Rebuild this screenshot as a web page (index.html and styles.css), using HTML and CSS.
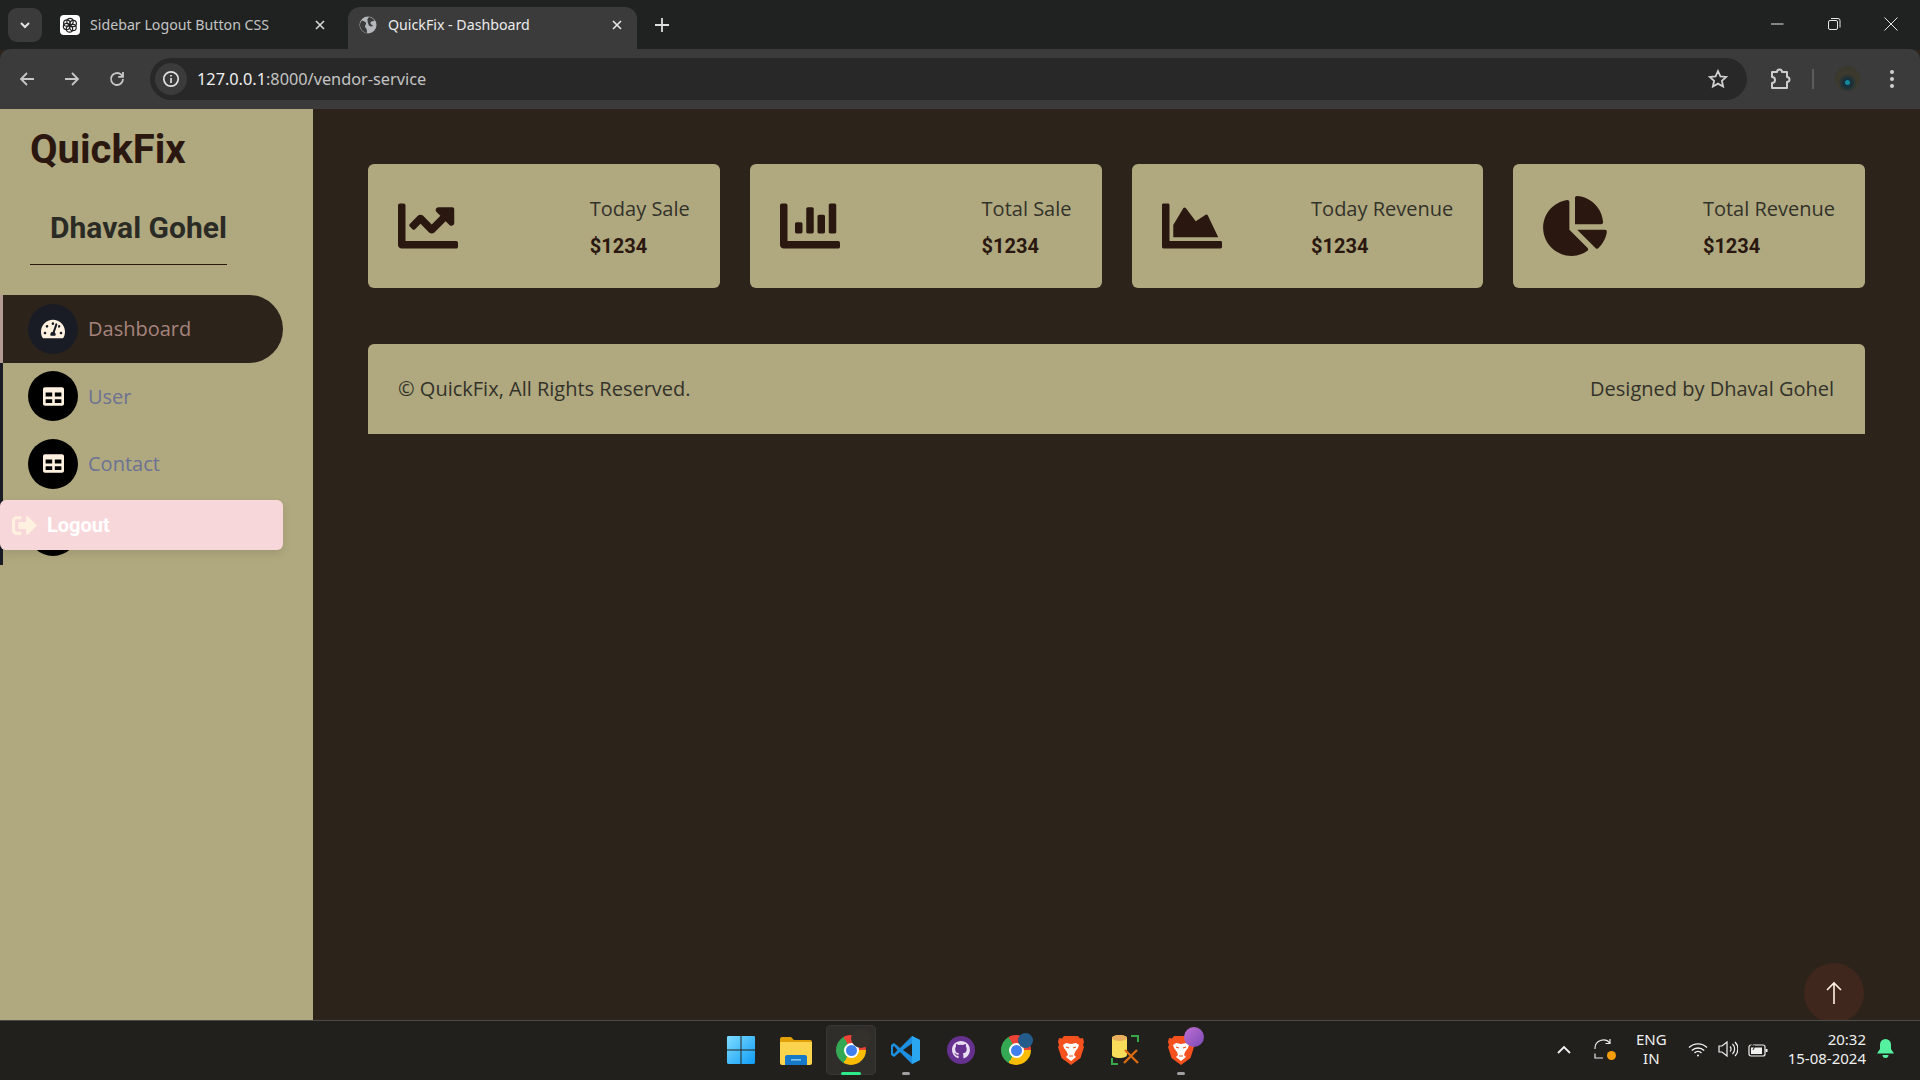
FILE: index.html
```html
<!DOCTYPE html>
<html lang="en">
<head>
    <meta charset="UTF-8">
    <meta name="viewport" content="width=device-width, initial-scale=1.0">
    <title>QuickFix - Dashboard</title>
    <link rel="stylesheet" href="styles.css">
</head>
<body>
    <!-- browser window -->
    <div class="tabbar">
        <div class="tab-search">
            <svg width="12" height="12" viewBox="0 0 12 12"><path d="M2 4l4 4 4-4" fill="none" stroke="#e3e3e3" stroke-width="2"/></svg>
        </div>
        <div class="tab">
            <span class="favicon favicon-gpt">
                <svg width="18" height="18" viewBox="0 0 18 18" fill="none" stroke="#222" stroke-width="1.2"><circle cx="9" cy="5.5" r="3.2"/><circle cx="12.2" cy="7.5" r="3.2"/><circle cx="12" cy="11.5" r="3.2"/><circle cx="8.5" cy="13" r="3.2"/><circle cx="5.5" cy="10.5" r="3.2"/><circle cx="5.8" cy="7" r="3.2"/></svg>
            </span>
            <span class="tab-title">Sidebar Logout Button CSS</span>
            <svg class="tab-close" width="12" height="12" viewBox="0 0 12 12"><path d="M2 2l8 8M10 2l-8 8" stroke="#d8d8d8" stroke-width="1.6"/></svg>
        </div>
        <div class="tab tab-active">
            <span class="favicon">
                <svg width="18" height="18" viewBox="0 0 18 18"><circle cx="9" cy="9" r="8.5" fill="#b5b8bb"/><path d="M3 4.5c2 .5 3.5 1 4 2.5S5 10 6.500 11.500 8 15 8 17c-4-.5-7-4-7-8 0-1.600.7-3.300 2-4.500zM10 1c2.500.5 4 1.500 5.500 3.500-1.500 1-3.500.5-4 2s1.500 2.500 2.500 3c-1 1.500-2.500 1-3.500.5S9 7 8.500 5 9 2.500 10 1z" fill="#3c3c3c"/></svg>
            </span>
            <span class="tab-title">QuickFix - Dashboard</span>
            <svg class="tab-close" width="12" height="12" viewBox="0 0 12 12"><path d="M2 2l8 8M10 2l-8 8" stroke="#e8e8e8" stroke-width="1.6"/></svg>
        </div>
        <svg class="new-tab" width="14" height="14" viewBox="0 0 14 14"><path d="M7 0v14M0 7h14" stroke="#dedede" stroke-width="1.800"/></svg>
        <div class="window-btns">
            <svg width="14" height="14" viewBox="0 0 14 14"><path d="M1 7h12.500" stroke="#e6e6e6" stroke-width="1"/></svg>
            <svg width="14" height="14" viewBox="0 0 14 14" fill="none" stroke="#e6e6e6"><rect x="1.500" y="3.500" width="9" height="9" rx="1.500"/><path d="M4 1.500h7a2 2 0 0 1 2 2v7"/></svg>
            <svg width="14" height="14" viewBox="0 0 14 14"><path d="M.5.5l13 13M13.500.5l-13 13" stroke="#e6e6e6"/></svg>
        </div>
    </div>

    <div class="toolbar">
        <svg class="nav-arrow" width="18" height="18" viewBox="0 0 18 18" fill="none" stroke="#c7c7c7" stroke-width="1.800"><path d="M16 9H3M9 3L3 9l6 6"/></svg>
        <svg class="nav-arrow" width="18" height="18" viewBox="0 0 18 18" fill="none" stroke="#c7c7c7" stroke-width="1.800"><path d="M2 9h13M9 3l6 6-6 6"/></svg>
        <svg class="nav-arrow" width="18" height="18" viewBox="0 0 18 18" fill="none" stroke="#c7c7c7" stroke-width="1.800"><path d="M15 9a6 6 0 1 1-1.800-4.300L15 6.500"/><path d="M15 2v4.800h-4.800" /></svg>
        <div class="omnibox">
            <span class="site-info">
                <svg width="18" height="18" viewBox="0 0 18 18" fill="none" stroke="#e0e0e0" stroke-width="1.700"><circle cx="9" cy="9" r="7.200"/><path d="M9 8v5M9 5v1.600"/></svg>
            </span>
            <span class="url"><span class="url-host">127.0.0.1</span>:8000/vendor-service</span>
            <svg class="star" width="20" height="20" viewBox="0 0 20 20" fill="none" stroke="#d0d0d0" stroke-width="1.800"><path d="M10 2l2.400 5.300 5.800.6-4.300 3.900 1.200 5.700L10 14.600l-5.100 2.900 1.200-5.700L1.800 7.900l5.800-.6z"/></svg>
        </div>
        <svg class="puzzle" width="22" height="22" viewBox="0 0 22 22" fill="none" stroke="#cdcdcd" stroke-width="2"><path d="M2 4h5a2.500 2.500 0 0 1 5 0h5v5a2.500 2.500 0 0 1 0 5v6H2v-5a3 3 0 0 0 0-6z" stroke-linejoin="round"/></svg>
        <span class="toolbar-sep"></span>
        <span class="avatar"><span class="avatar-eye"></span></span>
        <svg class="kebab" width="6" height="20" viewBox="0 0 6 20" fill="#cfcfcf"><circle cx="3" cy="3" r="2"/><circle cx="3" cy="10" r="2"/><circle cx="3" cy="17" r="2"/></svg>
    </div>

    <!-- page -->
    <div class="page">
        <aside class="sidebar">
            <h3 class="logo">QuickFix</h3>
            <div class="profile"><h4 class="profile-name">Dhaval Gohel</h4></div>
            <nav class="side-nav">
                <a href="#" class="nav-item active">
                    <span class="nav-icon">
                        <svg width="24" height="24" viewBox="0 0 576 512" fill="#fff1e0"><path d="M288 32C128.940 32 0 160.940 0 320c0 52.800 14.250 102.260 39.060 144.800 5.610 9.620 16.300 15.200 27.440 15.200h443c11.140 0 21.830-5.580 27.440-15.200C561.750 422.260 576 372.800 576 320c0-159.060-128.940-288-288-288zm0 64c14.710 0 26.580 10.130 30.320 23.650-1.110 2.260-2.640 4.230-3.450 6.670l-9.220 27.670c-5.130 3.490-10.970 6.010-17.640 6.010-17.670 0-32-14.330-32-32S270.330 96 288 96zM96 384c-17.670 0-32-14.330-32-32s14.330-32 32-32 32 14.330 32 32-14.330 32-32 32zm48-160c-17.670 0-32-14.330-32-32s14.330-32 32-32 32 14.330 32 32-14.330 32-32 32zm246.770-72.410l-61.330 184C343.130 347.330 352 364.540 352 384c0 11.720-3.380 22.550-8.880 32H232.880c-5.500-9.450-8.880-20.280-8.880-32 0-33.940 26.500-61.430 59.900-63.590l61.340-184.010c4.170-12.560 17.730-19.450 30.360-15.170 12.570 4.190 19.350 17.790 15.170 30.360zm14.660 57.200l15.520-46.550c3.470-1.290 7.130-2.230 11.050-2.230 17.670 0 32 14.330 32 32s-14.330 32-32 32c-11.380-.01-20.890-6.280-26.570-15.220zM480 384c-17.670 0-32-14.330-32-32s14.330-32 32-32 32 14.330 32 32-14.330 32-32 32z"/></svg>
                    </span>
                    Dashboard
                </a>
                <a href="#" class="nav-item">
                    <span class="nav-icon">
                        <svg width="21" height="21" viewBox="0 0 512 512" fill="#fff1e0"><path d="M464 32H48C21.490 32 0 53.490 0 80v352c0 26.510 21.490 48 48 48h416c26.510 0 48-21.490 48-48V80c0-26.510-21.490-48-48-48zM224 416H64v-96h160v96zm0-160H64v-96h160v96zm224 160H288v-96h160v96zm0-160H288v-96h160v96z"/></svg>
                    </span>
                    User
                </a>
                <a href="#" class="nav-item">
                    <span class="nav-icon">
                        <svg width="21" height="21" viewBox="0 0 512 512" fill="#fff1e0"><path d="M464 32H48C21.490 32 0 53.490 0 80v352c0 26.510 21.490 48 48 48h416c26.510 0 48-21.490 48-48V80c0-26.510-21.490-48-48-48zM224 416H64v-96h160v96zm0-160H64v-96h160v96zm224 160H288v-96h160v96zm0-160H288v-96h160v96z"/></svg>
                    </span>
                    Contact
                </a>
                <a href="#" class="nav-item">
                    <span class="nav-icon"></span>
                </a>
            </nav>
            <a href="#" class="logout-btn">
                <svg width="25" height="25" viewBox="0 0 512 512" fill="#fff1e0"><path d="M497 273L329 441c-15 15-41 4.500-41-17v-96H152c-13.300 0-24-10.700-24-24v-96c0-13.300 10.700-24 24-24h136V88c0-21.400 25.900-32 41-17l168 168c9.300 9.400 9.300 24.600 0 34zM192 436v-40c0-6.600-5.400-12-12-12H96c-17.700 0-32-14.300-32-32V160c0-17.700 14.300-32 32-32h84c6.600 0 12-5.400 12-12V76c0-6.600-5.400-12-12-12H96c-53 0-96 43-96 96v192c0 53 43 96 96 96h84c6.600 0 12-5.400 12-12z"/></svg>
                Logout
            </a>
        </aside>

        <main class="content">
            <section class="stats">
                <div class="stat-card">
                    <svg class="stat-icon" width="60" height="60" viewBox="0 0 512 512"><path d="M496 384H64V80c0-8.840-7.160-16-16-16H16C7.160 64 0 71.160 0 80v336c0 17.670 14.330 32 32 32h464c8.840 0 16-7.160 16-16v-32c0-8.840-7.160-16-16-16zM464 96H345.940c-21.380 0-32.090 25.850-16.970 40.970l32.400 32.400L288 242.750l-73.370-73.370c-12.500-12.500-32.760-12.500-45.250 0l-68.690 68.690c-6.250 6.250-6.250 16.380 0 22.630l22.620 22.620c6.250 6.250 16.380 6.250 22.630 0L192 237.250l73.370 73.370c12.500 12.500 32.760 12.500 45.250 0l96-96 32.400 32.400c15.120 15.120 40.970 4.410 40.970-16.970V112c.01-8.840-7.150-16-15.990-16z"/></svg>
                    <div class="stat-text"><p class="stat-label">Today Sale</p><h6 class="stat-value">$1234</h6></div>
                </div>
                <div class="stat-card">
                    <svg class="stat-icon" width="60" height="60" viewBox="0 0 512 512"><path d="M332.800 320h38.400c6.400 0 12.800-6.400 12.800-12.800V172.800c0-6.400-6.400-12.800-12.800-12.800h-38.400c-6.400 0-12.800 6.400-12.800 12.800v134.400c0 6.400 6.400 12.800 12.800 12.800zm96 0h38.400c6.400 0 12.800-6.400 12.800-12.800V76.800c0-6.400-6.400-12.800-12.800-12.800h-38.400c-6.400 0-12.800 6.400-12.800 12.800v230.400c0 6.400 6.400 12.800 12.800 12.800zm-288 0h38.400c6.400 0 12.800-6.400 12.800-12.800v-70.400c0-6.400-6.400-12.800-12.800-12.800h-38.400c-6.400 0-12.800 6.400-12.800 12.800v70.400c0 6.400 6.400 12.800 12.800 12.800zm96 0h38.400c6.400 0 12.800-6.400 12.800-12.800V108.800c0-6.400-6.400-12.800-12.800-12.800h-38.400c-6.400 0-12.800 6.400-12.800 12.800v198.400c0 6.400 6.400 12.800 12.800 12.800zM496 384H64V80c0-8.840-7.160-16-16-16H16C7.160 64 0 71.160 0 80v336c0 17.670 14.330 32 32 32h464c8.840 0 16-7.160 16-16v-32c0-8.840-7.160-16-16-16z"/></svg>
                    <div class="stat-text"><p class="stat-label">Total Sale</p><h6 class="stat-value">$1234</h6></div>
                </div>
                <div class="stat-card">
                    <svg class="stat-icon" width="60" height="60" viewBox="0 0 512 512"><path d="M500 384c6.600 0 12 5.400 12 12v40c0 6.600-5.400 12-12 12H12c-6.600 0-12-5.400-12-12V76c0-6.600 5.400-12 12-12h40c6.600 0 12 5.400 12 12v308h436zM372.700 159.500L288 216l-85.300-113.700c-5.100-6.800-15.500-6.300-19.900 1L96 248v104h384l-89.900-187.800c-3.200-6.500-11.400-8.700-17.400-4.700z"/></svg>
                    <div class="stat-text"><p class="stat-label">Today Revenue</p><h6 class="stat-value">$1234</h6></div>
                </div>
                <div class="stat-card">
                    <svg class="stat-icon" width="64" height="60" viewBox="0 0 544 512"><path d="M527.790 288H290.500l158.030 158.030c6.040 6.040 15.980 6.530 22.190.68 38.700-36.460 65.320-85.610 73.130-140.860 1.340-9.460-6.510-17.850-16.060-17.850zm-15.830-64.800C503.720 103.740 408.260 8.280 288.800.04 279.680-.59 272 7.100 272 16.240V240h223.770c9.140 0 16.820-7.680 16.190-16.800zM224 288V50.710c0-9.550-8.390-17.400-17.840-16.060C86.990 51.490-4.100 155.600.14 280.370 4.500 408.510 114.830 513.590 243.030 511.980c50.400-.63 96.970-16.870 135.260-44.030 7.900-5.600 8.420-17.230 1.570-24.080L224 288z"/></svg>
                    <div class="stat-text"><p class="stat-label">Total Revenue</p><h6 class="stat-value">$1234</h6></div>
                </div>
            </section>
            <footer class="page-footer">
                <span>&copy; QuickFix, All Rights Reserved.</span>
                <span>Designed by Dhaval Gohel</span>
            </footer>
        </main>

        <a href="#" class="back-top">
            <svg width="16" height="24" viewBox="0 0 16 24" fill="none" stroke="#fff1e0" stroke-width="1.600"><path d="M8 23V2M1 9l7-7 7 7"/></svg>
        </a>
    </div>

    <!-- windows taskbar -->
    <div class="taskbar">
        <div class="task-spacer"></div>
        <div class="task-icons">
            <span class="task-slot">
                <svg width="30" height="30" viewBox="0 0 31 31"><defs><linearGradient id="winblue" x1="0" y1="0" x2="1" y2="1"><stop offset="0" stop-color="#7fdcff"/><stop offset="1" stop-color="#0f9cf5"/></linearGradient></defs><path d="M1 2.500A1.500 1.500 0 0 1 2.500 1H15v14H1zM16 1h12.500A1.500 1.500 0 0 1 30 2.500V15H16zM1 16h14v14H2.500A1.500 1.500 0 0 1 1 28.500zM16 16h14v12.500a1.500 1.500 0 0 1-1.500 1.500H16z" fill="url(#winblue)"/></svg>
            </span>
            <span class="task-slot">
                <svg width="32" height="29" viewBox="0 0 32 29"><path d="M0 3a2 2 0 0 1 2-2h9l3 3h16a2 2 0 0 1 2 2v3H0z" fill="#e3a008"/><path d="M0 6h32v21a2 2 0 0 1-2 2H2a2 2 0 0 1-2-2z" fill="#fcd34d"/><path d="M5 21a2 2 0 0 1 2-2h18a2 2 0 0 1 2 2v8H5z" fill="#1878c8"/><rect x="11" y="23" width="10" height="1.600" fill="#7cc4f0"/></svg>
            </span>
            <span class="task-slot task-slot-active">
                <span class="chrome-logo"><span class="chrome-eye"></span></span>
                <span class="profile-badge badge-dark"></span>
                <span class="run-dot run-dot-on"></span>
            </span>
            <span class="task-slot">
                <svg width="30" height="30" viewBox="0 0 30 30"><path d="M21 1l8 4v20l-8 4-12-12-6 5-3-2V10l3-2 6 5z" fill="#1d8fe0"/><path d="M21 1l8 4v20l-8 4z" fill="#2aa6f0"/><path d="M21 8.500L12 15l9 6.500z" fill="#21201c"/><path d="M3 11l-1 1v6l1 1 3.500-4z" fill="#21201c"/></svg>
                <span class="run-dot"></span>
            </span>
            <span class="task-slot">
                <svg width="28" height="28" viewBox="0 0 28 28"><circle cx="14" cy="14" r="14" fill="#66308f"/><path d="M14 5c-5 0-9 3.800-9 8.800 0 3.900 2.500 7.200 6 8.400.4.100.6-.2.600-.5v-2c-2.300.5-3-1-3-1-.4-1-1-1.300-1-1.300-.7-.5.100-.5.100-.5.800.1 1.300.9 1.300.9.800 1.300 2 1 2.600.7.100-.6.300-1 .6-1.200-2-.2-4-1-4-4.400 0-1 .3-1.800.9-2.400-.1-.2-.4-1.100.1-2.400 0 0 .8-.2 2.500 1a8.500 8.500 0 0 1 4.500 0c1.700-1.200 2.500-1 2.500-1 .5 1.300.2 2.200.1 2.400.6.600.9 1.400.9 2.400 0 3.400-2 4.200-4 4.400.3.300.6.800.6 1.600v2.900c0 .3.200.6.600.5 3.500-1.200 6-4.500 6-8.400C23 8.800 19 5 14 5z" fill="#e9ddf2"/></svg>
            </span>
            <span class="task-slot">
                <span class="chrome-logo"><span class="chrome-eye"></span></span>
                <span class="profile-badge badge-blue"></span>
            </span>
            <span class="task-slot">
                <svg width="26" height="30" viewBox="0 0 26 30"><path d="M6 1h14l2 2.500 3-.5 1 4-1 3 1 2-3.500 11-7.500 5.500-2 1.500-2-1.500L3.500 23 0 12l1-2-1-3 1-4 3 .5z" fill="#f4511e"/><path d="M8 8l5 1 5-1 3 2-1 3-3 4-1 3 2 2-5 4-5-4 2-2-1-3-3-4-1-3z" fill="#fff"/><path d="M8 12l3 1M18 12l-3 1M11 21h4" stroke="#f4511e" stroke-width="1.200"/></svg>
            </span>
            <span class="task-slot">
                <svg width="30" height="30" viewBox="0 0 30 30"><path d="M1 3c0-1.600 3-3 7.500-3S16 1.400 16 3v17c0 1.600-3 3-7.500 3S1 21.600 1 20z" fill="#f7dd5a"/><ellipse cx="8.500" cy="3" rx="7.500" ry="3" fill="#e8ad5e"/><path d="M20 1h7v6M1 23v6h6M27 20" fill="none" stroke="#39a84a" stroke-width="2"/><path d="M13 28l13-13M14 15l13 13" stroke="#d96a12" stroke-width="2.400"/></svg>
            </span>
            <span class="task-slot">
                <svg width="26" height="30" viewBox="0 0 26 30"><path d="M6 1h14l2 2.500 3-.5 1 4-1 3 1 2-3.500 11-7.500 5.500-2 1.500-2-1.500L3.500 23 0 12l1-2-1-3 1-4 3 .5z" fill="#f4511e"/><path d="M8 8l5 1 5-1 3 2-1 3-3 4-1 3 2 2-5 4-5-4 2-2-1-3-3-4-1-3z" fill="#fff"/><path d="M8 12l3 1M18 12l-3 1M11 21h4" stroke="#f4511e" stroke-width="1.200"/></svg>
                <span class="profile-badge badge-purple"></span>
                <span class="run-dot"></span>
            </span>
        </div>
        <div class="tray">
            <svg width="14" height="9" viewBox="0 0 14 9" fill="none" stroke="#f0f0f0" stroke-width="1.800"><path d="M1 8l6-6 6 6"/></svg>
            <span class="tray-sync">
                <svg width="21" height="22" viewBox="0 0 21 22" fill="none" stroke="#e8e8e8" stroke-width="1.200"><path d="M1 11A8.500 8.500 0 0 1 16 5M16 1v4.500h-4.500M5 20h4M1 15.500V20h4.500"/></svg>
                <span class="tray-sync-dot"></span>
            </span>
            <span class="tray-lang">ENG<br>IN</span>
            <span class="tray-status">
                <svg width="20" height="15" viewBox="0 0 20 15" fill="none" stroke="#f0f0f0" stroke-width="1.400"><path d="M1 5.500a13 13 0 0 1 18 0M3.800 8.500a9 9 0 0 1 12.400 0M6.500 11a5 5 0 0 1 7 0"/><circle cx="10" cy="13.500" r="1" fill="#f0f0f0" stroke="none"/></svg>
                <svg width="20" height="18" viewBox="0 0 20 18" fill="none" stroke="#f0f0f0" stroke-width="1.200"><path d="M1 6h3l5-4v14l-5-4H1zM12 6.500a3.500 3.500 0 0 1 0 5M14.500 4a7 7 0 0 1 0 10M17 2a10 10 0 0 1 0 14"/></svg>
                <svg width="20" height="17" viewBox="0 0 20 17" fill="none" stroke="#f0f0f0" stroke-width="1.200"><rect x="1" y="4" width="16" height="11" rx="2"/><rect x="3" y="6.500" width="11" height="6.500" fill="#f0f0f0" stroke="none"/><path d="M18.500 8v3" stroke-width="2"/><path d="M6 0L3.500 5H7L5 9" stroke="#21201c" stroke-width="1"/></svg>
            </span>
            <span class="tray-clock">20:32<br>15-08-2024</span>
            <svg class="tray-bell" width="17" height="20" viewBox="0 0 17 20" fill="#55f0a0"><path d="M8.500 0a5.500 5.500 0 0 1 5.500 5.500V10l3 4.500H0L3 10V5.500A5.500 5.500 0 0 1 8.500 0z"/><path d="M5.500 16h6a3 3 0 0 1-6 0z"/></svg>
        </div>
    </div>
</body>
</html>
```

FILE: styles.css
```css
* {
    box-sizing: border-box;
}
body {
    margin: 0;
    height: 1080px;
    overflow: hidden;
    display: flex;
    flex-direction: column;
    font-family: "Open Sans", sans-serif;
    font-size: 20px;
    background-color: #2c231b;
}
a {
    text-decoration: none;
}

/* browser chrome */
.tabbar {
    height: 50px;
    flex: none;
    display: flex;
    background-color: #202221;
    padding-top: 7px;
    position: relative;
}
.tab-search {
    width: 34px;
    height: 34px;
    margin: 1px 0 0 8px;
    background-color: #3b3b3b;
    border-radius: 9px;
    display: flex;
    align-items: center;
    justify-content: center;
}
.tab {
    width: 286px;
    height: 43px;
    margin-left: 18px;
    padding: 0 0 8px 0;
    display: flex;
    align-items: center;
    font-family: "Noto Sans", sans-serif;
    font-size: 14.2px;
    color: #c4c4c4;
}
.tab-active {
    width: 289px;
    margin-left: 2px;
    padding-left: 10px;
    background-color: #3b3b3b;
    border-radius: 12px 12px 0 0;
    color: #ececec;
}
.favicon {
    width: 20px;
    height: 20px;
    border-radius: 4px;
    display: flex;
    align-items: center;
    justify-content: center;
    margin-right: 10px;
}
.favicon-gpt {
    background-color: #fff;
}
.tab-title {
    flex: 1;
    white-space: nowrap;
}
.tab-close {
    margin-right: 20px;
}
.tab-active .tab-close {
    margin-right: 14px;
}
.new-tab {
    margin: 11px 0 0 18px;
}
.window-btns {
    margin-left: auto;
    display: flex;
    gap: 43px;
    padding: 10px 22px 0 0;
}
.toolbar {
    height: 60px;
    flex: none;
    display: flex;
    align-items: center;
    background-color: #3b3b3b;
    border-radius: 10px 10px 0 0;
    margin-top: -1px;
    padding: 0 0 1px 18px;
    position: relative;
}
.nav-arrow {
    margin-right: 27px;
}
.nav-arrow:nth-of-type(3) {
    margin-right: 24px;
}
.omnibox {
    width: 1597px;
    height: 42px;
    background-color: #282828;
    border-radius: 21px;
    display: flex;
    align-items: center;
    padding-left: 5px;
}
.site-info {
    width: 32px;
    height: 32px;
    border-radius: 50%;
    background-color: #3b3b3b;
    display: flex;
    align-items: center;
    justify-content: center;
    margin-right: 10px;
}
.url {
    flex: 1;
    font-family: "Noto Sans", sans-serif;
    font-size: 16.3px;
    color: #c4c4c4;
}
.url-host {
    color: #f0f0f0;
}
.star {
    margin-right: 19px;
}
.puzzle {
    margin-left: 23px;
}
.toolbar-sep {
    width: 2px;
    height: 20px;
    background-color: #5c5c5c;
    margin-left: 20px;
}
.avatar {
    width: 25px;
    height: 25px;
    margin-left: 21px;
    border-radius: 50%;
    background: radial-gradient(circle at 50% 68%, #17303a 0 20%, #3e3a2e 45%, #37352c 100%);
    display: flex;
    align-items: center;
    justify-content: center;
}
.avatar-eye {
    width: 5px;
    height: 5px;
    margin-top: 7px;
    border-radius: 50%;
    background-color: #138a9c;
}
.kebab {
    margin-left: 29px;
}

/* page */
.page {
    height: 912px;
    flex: none;
    display: flex;
    position: relative;
}
.sidebar {
    width: 313px;
    flex: none;
    background-color: #b0a97f;
    position: relative;
    padding-top: 17px;
}
.logo {
    margin: 0 0 0 30px;
    font-family: Roboto, sans-serif;
    font-size: 40px;
    font-weight: 700;
    line-height: 48px;
    color: #2a1810;
}
.profile {
    width: 197px;
    margin-left: 30px;
    padding: 36px 0 18px 20px;
    border-bottom: 1px solid #2a1810;
}
.profile-name {
    margin: 0;
    font-family: Roboto, sans-serif;
    font-size: 30px;
    font-weight: 700;
    line-height: 36px;
    color: #2b2b25;
    white-space: nowrap;
}
.side-nav {
    margin-top: 30px;
    width: 283px;
}
.nav-item {
    height: 67.5px;
    display: flex;
    align-items: center;
    gap: 10px;
    padding-left: 25px;
    border-left: 3px solid #191c24;
    color: #6c7293;
}
.nav-item.active {
    background-color: #2c231b;
    border-left-color: #b39a94;
    border-radius: 0 34px 34px 0;
    color: #a6837d;
}
.nav-icon {
    width: 50px;
    height: 50px;
    flex: none;
    border-radius: 50%;
    background-color: #000;
    display: flex;
    align-items: center;
    justify-content: center;
}
.active .nav-icon {
    background-color: #191c24;
}
.logout-btn {
    position: absolute;
    left: 0;
    top: 391px;
    width: 283px;
    height: 50px;
    display: flex;
    align-items: center;
    gap: 10px;
    padding-left: 12px;
    background-color: #f8d7da;
    border-radius: 6px;
    box-shadow: 0 4px 8px rgba(0, 0, 0, 0.1);
    font-family: Roboto, sans-serif;
    font-weight: 700;
    color: #fff;
}
.content {
    flex: 1;
    padding: 55px 55px 0;
}
.stats {
    display: grid;
    grid-template-columns: repeat(4, 1fr);
    gap: 30px;
}
.stat-card {
    height: 124px;
    padding: 0 30px;
    background-color: #b0a97f;
    border-radius: 6px;
    display: flex;
    align-items: center;
    justify-content: space-between;
}
.stat-icon {
    fill: #2a1810;
}
.stat-label {
    margin: 0 0 12px;
    line-height: 27px;
    color: #33322a;
}
.stat-value {
    margin: 0;
    font-family: Roboto, sans-serif;
    font-size: 20px;
    font-weight: 700;
    line-height: 24px;
    color: #2a1810;
}
.page-footer {
    margin-top: 56px;
    height: 90px;
    padding: 0 31px 2px 30px;
    background-color: #b0a97f;
    border-radius: 6px 6px 0 0;
    display: flex;
    align-items: center;
    justify-content: space-between;
    color: #33322a;
}
.back-top {
    position: absolute;
    left: 1804px;
    top: 854px;
    width: 60px;
    height: 60px;
    border-radius: 50%;
    background-color: #40271d;
    display: flex;
    align-items: center;
    justify-content: center;
}

/* taskbar */
.taskbar {
    height: 60px;
    flex: none;
    margin-top: -1px;
    display: grid;
    grid-template-columns: 1fr auto 1fr;
    background-color: #21201c;
    border-top: 1px solid #4a4a47;
    position: relative;
}
.task-icons {
    display: flex;
    align-items: center;
    padding: 0 0 1px 2px;
}
.task-slot {
    width: 50px;
    height: 50px;
    margin: 0 2.500px;
    border-radius: 5px;
    display: flex;
    align-items: center;
    justify-content: center;
    position: relative;
}
.task-slot-active {
    background-color: #2f2e2a;
    box-shadow: inset 0 0 0 1px #383733;
}
.run-dot {
    position: absolute;
    left: 21px;
    bottom: 0;
    width: 8px;
    height: 3px;
    border-radius: 2px;
    background-color: #a0a0a0;
}
.run-dot-on {
    left: 15px;
    width: 20px;
    background-color: #2dea8a;
}
.chrome-logo {
    width: 30px;
    height: 30px;
    border-radius: 50%;
    background: conic-gradient(#ea4335 0 90deg, #fbbc04 90deg 210deg, #34a853 210deg 330deg, #ea4335 330deg);
    display: flex;
    align-items: center;
    justify-content: center;
}
.chrome-eye {
    width: 15px;
    height: 15px;
    border-radius: 50%;
    background-color: #3f7fee;
    border: 2px solid #fff;
}
.profile-badge {
    position: absolute;
    right: 5px;
    top: 3px;
    width: 20px;
    height: 20px;
    border-radius: 50%;
}
.badge-dark {
    background-color: #34312c;
}
.badge-blue {
    width: 15px;
    height: 15px;
    top: 8px;
    right: 8px;
    background-color: #235c8a;
}
.badge-purple {
    top: 2px;
    right: 2px;
    background: linear-gradient(135deg, #c06fd0, #7a4ab8);
}
.tray {
    display: flex;
    align-items: center;
    justify-content: flex-end;
    padding-bottom: 3px;
    color: #f0f0f0;
    font-family: "Noto Sans", sans-serif;
    font-size: 15px;
    line-height: 19px;
}
.tray > svg:first-child {
    margin-right: 23px;
}
.tray-sync {
    position: relative;
    display: flex;
}
.tray-sync-dot {
    position: absolute;
    right: -1px;
    bottom: 0;
    width: 9px;
    height: 9px;
    border-radius: 50%;
    background-color: #f59c0b;
}
.tray-lang {
    margin-left: 21px;
    text-align: center;
}
.tray-status {
    display: flex;
    align-items: center;
    gap: 10px;
    margin-left: 21px;
}
.tray-clock {
    margin-left: 20px;
    text-align: right;
}
.tray-bell {
    margin: 0 26px 0 11px;
}
```
